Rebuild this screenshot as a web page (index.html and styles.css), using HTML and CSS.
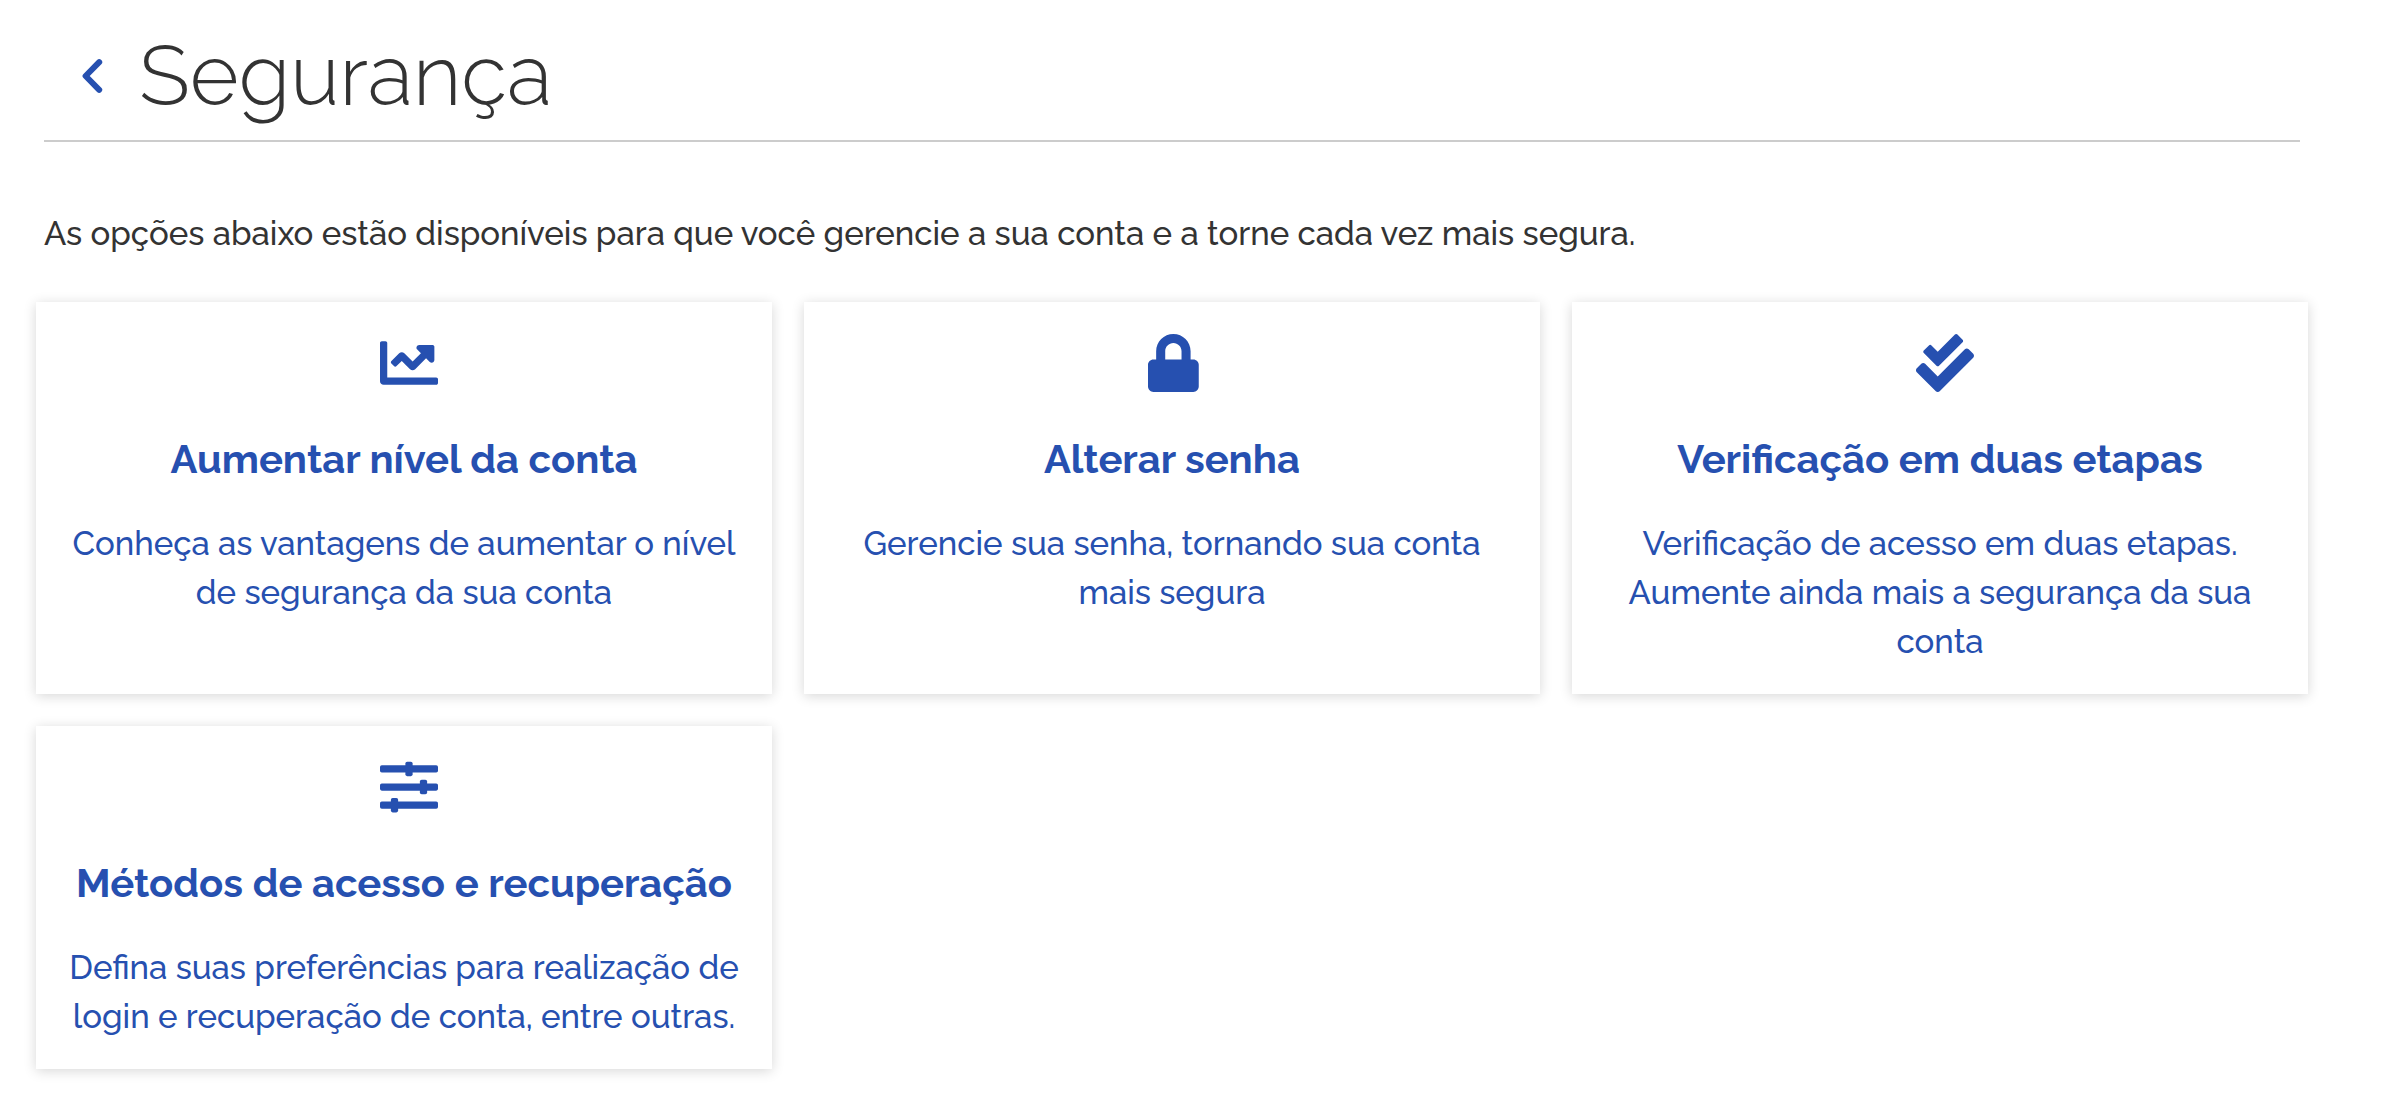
FILE: index.html
```html
<!doctype html>
<html lang="pt-BR">
<head>
    <meta charset="utf-8">
    <meta name="viewport" content="width=device-width, initial-scale=1">

    <title>Segurança</title>

    <link rel="stylesheet" href="styles.css">
</head>
<body>

<main>
    <header class="page-header">
        <a href="#" class="back" aria-label="Voltar">
            <svg viewBox="0 0 24 34" focusable="false">
                <path d="M17.2 3.2L3.6 17l13.6 13.8"></path>
            </svg>
        </a>
        <h1>Segurança</h1>
    </header>

    <p class="intro">As opções abaixo estão disponíveis para que você gerencie a sua conta e a torne cada vez mais segura.</p>

    <div class="cards">
        <a href="#" class="card">
            <span class="card-icon">
                <svg viewBox="0 0 512 512" focusable="false">
                    <path d="M496 384H64V80c0-8.84-7.16-16-16-16H16C7.16 64 0 71.16 0 80v336c0 17.67 14.33 32 32 32h464c8.84 0 16-7.16 16-16v-32c0-8.84-7.16-16-16-16zM464 96H345.94c-21.38 0-32.09 25.85-16.97 40.97l32.4 32.4L288 242.75l-73.37-73.37c-12.5-12.5-32.76-12.5-45.25 0l-68.69 68.69c-6.25 6.25-6.25 16.38 0 22.63l22.62 22.62c6.25 6.25 16.38 6.25 22.63 0L192 237.25l73.37 73.37c12.5 12.5 32.76 12.5 45.25 0l96-96 32.4 32.4c15.12 15.12 40.97 4.41 40.97-16.97V112c.01-8.84-7.15-16-15.99-16z"></path>
                </svg>
            </span>
            <h2>Aumentar nível da conta</h2>
            <p>Conheça as vantagens de aumentar o nível de segurança da sua conta</p>
        </a>

        <a href="#" class="card">
            <span class="card-icon">
                <svg viewBox="0 0 512 512" focusable="false">
                    <path d="M400 224h-24v-72C376 68.2 307.8 0 224 0S72 68.2 72 152v72H48c-26.5 0-48 21.5-48 48v192c0 26.5 21.5 48 48 48h352c26.5 0 48-21.5 48-48V272c0-26.5-21.5-48-48-48zm-104 0H152v-72c0-39.7 32.3-72 72-72s72 32.3 72 72v72z"></path>
                </svg>
            </span>
            <h2>Alterar senha</h2>
            <p>Gerencie sua senha, tornando sua conta mais segura</p>
        </a>

        <a href="#" class="card">
            <span class="card-icon">
                <svg viewBox="0 0 512 512" focusable="false">
                    <path d="M505 174.8l-39.6-39.6c-9.4-9.4-24.6-9.4-33.9 0L192 374.7 80.6 263.2c-9.4-9.4-24.6-9.4-33.9 0L7 302.9c-9.4 9.4-9.4 24.6 0 34L175 505c9.4 9.4 24.6 9.4 33.9 0l296-296.2c9.4-9.5 9.4-24.7.1-34zm-324.3 106c6.2 6.3 16.4 6.3 22.6 0l208-208.2c6.2-6.3 6.2-16.4 0-22.6L366.1 4.7c-6.2-6.3-16.4-6.3-22.6 0L192 156.2l-55.4-55.5c-6.2-6.3-16.4-6.3-22.6 0L68.7 146c-6.2 6.3-6.2 16.4 0 22.6l112 112.2z"></path>
                </svg>
            </span>
            <h2>Verificação em duas etapas</h2>
            <p>Verificação de acesso em duas etapas. Aumente ainda mais a segurança da sua conta</p>
        </a>

        <a href="#" class="card">
            <span class="card-icon">
                <svg viewBox="0 0 512 512" focusable="false">
                    <rect x="0" y="64" width="512" height="64" rx="16"></rect>
                    <rect x="224" y="32" width="64" height="128" rx="16"></rect>
                    <rect x="0" y="224" width="512" height="64" rx="16"></rect>
                    <rect x="352" y="192" width="64" height="128" rx="16"></rect>
                    <rect x="0" y="384" width="512" height="64" rx="16"></rect>
                    <rect x="96" y="352" width="64" height="128" rx="16"></rect>
                </svg>
            </span>
            <h2>Métodos de acesso e recuperação</h2>
            <p>Defina suas preferências para realização de login e recuperação de conta, entre outras.</p>
        </a>
    </div>
</main>

</body>
</html>
```
FILE: styles.css
```css
body {
    margin: 0;
    font-family: 'Raleway', 'Lato', sans-serif;
    font-size: 33px;
    font-weight: 500;
    line-height: 49px;
    color: #333;
    background-color: #fff;
}

main {
    padding: 28px 80px 40px 36px;
}

h1, h2, p {
    margin: 0;
}

.page-header {
    display: flex;
    align-items: center;
    margin: 0 8px;
    padding: 0 0 16px 38px;
    border-bottom: 2px solid #ccc;
}

.back {
    width: 24px;
    margin-right: 33px;
}

.back svg {
    display: block;
    width: 24px;
    height: 34px;
    fill: none;
    stroke: #2650b0;
    stroke-width: 6;
    stroke-linecap: round;
    stroke-linejoin: round;
}

h1 {
    font-size: 84px;
    font-weight: 300;
    line-height: 96px;
}

.intro {
    margin: 67px 8px 44px;
}

.cards {
    display: grid;
    grid-template-columns: repeat(3, 1fr);
    gap: 32px;
}

.card {
    display: flex;
    flex-direction: column;
    align-items: center;
    padding: 32px 24px 28px;
    text-align: center;
    text-decoration: none;
    color: #2650b0;
    background-color: #fff;
    box-shadow: 0 2px 12px rgba(0, 0, 0, 0.16);
}

/* icons are wider than their slot and overflow to the right */
.card-icon {
    width: 48px;
    height: 58px;
}

.card-icon svg {
    display: block;
    width: 58px;
    height: 58px;
    fill: currentColor;
}

.card h2 {
    margin: 42px 0 36px;
    font-size: 40px;
    font-weight: 700;
    line-height: 49px;
}

@media (max-width: 1200px) {
    .cards {
        grid-template-columns: 1fr;
    }
}
```
